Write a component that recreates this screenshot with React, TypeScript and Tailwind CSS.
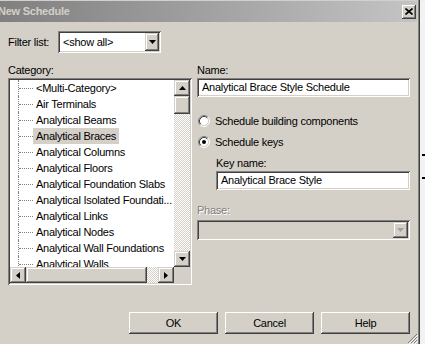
import React from "react";

const raised =
  "shadow-[inset_-1px_-1px_0_#404040,inset_1px_1px_0_#d4d0c8,inset_-2px_-2px_0_#808080,inset_2px_2px_0_#ffffff]";
const sunken =
  "shadow-[inset_1px_1px_0_#808080,inset_-1px_-1px_0_#ffffff,inset_2px_2px_0_#404040,inset_-2px_-2px_0_#d4d0c8]";
const button =
  "shadow-[inset_-1px_-1px_0_#404040,inset_1px_1px_0_#ffffff,inset_-2px_-2px_0_#808080]";
const checker =
  "bg-[repeating-conic-gradient(#d4d0c8_0%_25%,#ffffff_0%_50%)] bg-[length:2px_2px]";

const categories = [
  "<Multi-Category>",
  "Air Terminals",
  "Analytical Beams",
  "Analytical Braces",
  "Analytical Columns",
  "Analytical Floors",
  "Analytical Foundation Slabs",
  "Analytical Isolated Foundati...",
  "Analytical Links",
  "Analytical Nodes",
  "Analytical Wall Foundations",
  "Analytical Walls",
];

function Arrow({ dir, color = "#000000" }: { dir: "up" | "down" | "left" | "right"; color?: string }) {
  const pts = {
    up: "3.5,0 7,4 0,4",
    down: "0,0 7,0 3.5,4",
    left: "4,0 4,7 0,3.5",
    right: "0,0 4,3.5 0,7",
  }[dir];
  const vertical = dir === "up" || dir === "down";
  return (
    <svg width={vertical ? 7 : 4} height={vertical ? 4 : 7} viewBox={vertical ? "0 0 7 4" : "0 0 4 7"}>
      <polygon points={pts} fill={color} />
    </svg>
  );
}

function Radio({ checked }: { checked?: boolean }) {
  return (
    <svg width="12" height="12" viewBox="0 0 12 12" className="shrink-0">
      <circle cx="6" cy="6" r="4.5" fill="#ffffff" />
      <path d="M2.11 9.89 A5.5 5.5 0 0 1 9.89 2.11" stroke="#808080" fill="none" />
      <path d="M9.89 2.11 A5.5 5.5 0 0 1 2.11 9.89" stroke="#ffffff" fill="none" />
      <path d="M2.82 9.18 A4.5 4.5 0 0 1 9.18 2.82" stroke="#404040" fill="none" />
      <path d="M9.18 2.82 A4.5 4.5 0 0 1 2.82 9.18" stroke="#d4d0c8" fill="none" />
      {checked && <circle cx="6" cy="6" r="2" fill="#000000" />}
    </svg>
  );
}

function CategoryList() {
  return (
    <div className={`flex h-[207px] flex-col bg-white p-[2px] ${sunken}`}>
      <div className="flex min-h-0 flex-1">
        <div className="min-w-0 flex-1 overflow-hidden">
          {categories.map((c) => (
            <div key={c} className="flex h-4 shrink-0 items-center whitespace-nowrap">
              <div className="ml-[8px] flex h-full w-[15px] shrink-0 items-center border-l border-dotted border-[#808080]">
                <div className="w-full border-t border-dotted border-[#808080]" />
              </div>
              <span
                className={`px-[3px] leading-4 ${c === "Analytical Braces" ? "bg-[#d4d0c8]" : ""}`}
              >
                {c}
              </span>
            </div>
          ))}
        </div>
        <div className={`flex w-4 flex-col ${checker}`}>
          <div className={`flex h-4 items-center justify-center bg-[#d4d0c8] ${raised}`}>
            <Arrow dir="up" />
          </div>
          <div className={`h-[18px] bg-[#d4d0c8] ${raised}`} />
          <div className="flex-1" />
          <div className={`flex h-4 items-center justify-center bg-[#d4d0c8] ${raised}`}>
            <Arrow dir="down" />
          </div>
        </div>
      </div>
      <div className="flex h-4">
        <div className={`flex flex-1 ${checker}`}>
          <div className={`flex w-4 items-center justify-center bg-[#d4d0c8] ${raised}`}>
            <Arrow dir="left" />
          </div>
          <div className={`w-[121px] bg-[#d4d0c8] ${raised}`} />
          <div className="flex-1" />
          <div className={`flex w-4 items-center justify-center bg-[#d4d0c8] ${raised}`}>
            <Arrow dir="right" />
          </div>
        </div>
        <div className="w-4 bg-[#d4d0c8]" />
      </div>
    </div>
  );
}

export default function App() {
  return (
    <div className="flex h-[344px] w-[425px] overflow-hidden bg-[#f2f2f2] font-['Liberation_Sans',Arial,sans-serif] text-[11px] tracking-[-0.25px] text-black">
      {/* Dialog window */}
      <div className="relative flex h-full w-[420px] shrink-0 flex-col bg-[#d4d0c8] pt-[1px] shadow-[inset_-1px_0_0_#404040,inset_-2px_0_0_#808080]">
        {/* Title bar */}
        <div className="mr-[3px] flex h-[21px] items-center bg-linear-to-r from-[#808080] to-[#c4c4c4]">
          <span className="-ml-[2px] flex-1 font-bold text-[#d4d0c8]">New Schedule</span>
          <div className={`mr-[1px] flex h-[14px] w-[14px] items-center justify-center bg-[#d4d0c8] ${button}`}>
            <svg width="8" height="7" viewBox="0 0 8 7">
              <path d="M0.5 0.5 L7.5 6.5 M7.5 0.5 L0.5 6.5" stroke="#000" strokeWidth="1.6" />
            </svg>
          </div>
        </div>

        <div className="flex flex-1 flex-col pl-[8px] pr-[10px]">
          {/* Filter row */}
          <div className="mt-[9px] flex h-[22px] items-center">
            <span className="w-[50px]">Filter list:</span>
            <div className={`flex h-[22px] w-[103px] items-center bg-white ${sunken}`}>
              <span className="flex-1 pl-[5px]">&lt;show all&gt;</span>
              <div className={`mr-[2px] flex h-[18px] w-[14px] items-center justify-center bg-[#d4d0c8] ${raised}`}>
                <Arrow dir="down" />
              </div>
            </div>
          </div>

          {/* Main row */}
          <div className="mt-[9px] flex">
            <div className="flex w-[184px] flex-col">
              <div className="h-4 leading-4">Category:</div>
              <CategoryList />
            </div>

            <div className="ml-[5px] flex flex-1 flex-col">
              <div className="h-4 leading-4">Name:</div>
              <div className={`flex h-[19px] items-center bg-white pl-[5px] ${sunken}`}>
                Analytical Brace Style Schedule
              </div>

              <div className="mt-[16px] flex h-4 items-center gap-[5px] pl-[1px]">
                <Radio />
                <span>Schedule building components</span>
              </div>
              <div className="mt-[5px] flex h-4 items-center gap-[5px] pl-[1px]">
                <Radio checked />
                <span>Schedule keys</span>
              </div>

              <div className="ml-[19px] mt-[5px] h-4 leading-4">Key name:</div>
              <div className={`ml-[19px] flex h-[19px] items-center bg-white pl-[5px] ${sunken}`}>
                Analytical Brace Style
              </div>

              <div className="mt-[12px] h-4 leading-4 text-[#808080] [text-shadow:1px_1px_0_#ffffff]">
                Phase:
              </div>
              <div className={`mt-[2px] flex h-[20px] items-center justify-end bg-[#d4d0c8] ${sunken}`}>
                <div className={`mr-[2px] flex h-[16px] w-[15px] items-center justify-center bg-[#d4d0c8] ${raised}`}>
                  <Arrow dir="down" color="#a0a0a0" />
                </div>
              </div>
            </div>
          </div>

          {/* Buttons */}
          <div className="mt-[27px] flex justify-end gap-[7px]">
            {["OK", "Cancel", "Help"].map((b) => (
              <div key={b} className={`flex h-[22px] w-[89px] items-center justify-center bg-[#d4d0c8] ${button}`}>
                {b}
              </div>
            ))}
          </div>
        </div>

        {/* Resize grip */}
        <svg className="absolute bottom-0 right-[2px]" width="11" height="11" viewBox="0 0 11 11">
          <path d="M10 1 L1 10 M10 4 L4 10 M10 7 L7 10" stroke="#808080" />
          <path d="M11 2 L2 11 M11 5 L5 11 M11 8 L8 11" stroke="#ffffff" />
        </svg>
      </div>

      {/* Outside strip */}
      <div className="flex w-[5px] flex-col">
        <div className="ml-[2px] mt-[154px] h-[2px] w-[3px] bg-black" />
        <div className="ml-[2px] mt-[21px] h-[2px] w-[3px] bg-black" />
      </div>
    </div>
  );
}
